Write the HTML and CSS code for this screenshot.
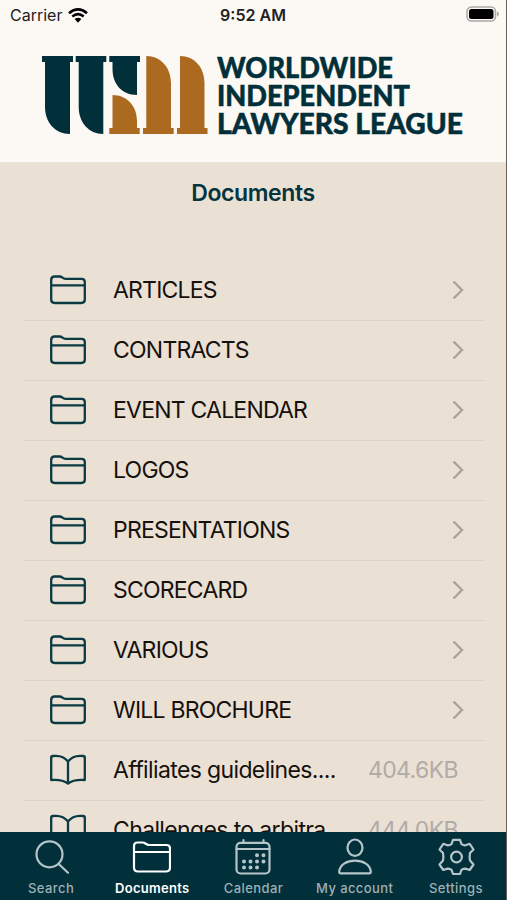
FILE: index.html
```html
<!DOCTYPE html>
<html lang="en">
<head>
    <meta charset="UTF-8">
    <meta name="viewport" content="width=device-width, initial-scale=1.0">
    <title>Documents</title>
    <link rel="stylesheet" href="styles.css">
</head>
<body>
    <!-- shared icons -->
    <svg class="symbols">
        <symbol id="folder" viewBox="0 0 36 30">
            <path d="M1.2 5 Q1.2 1.5 4.7 1.5 H9.5 C12.5 1.5 12.5 3.8 15.5 3.8 H31.5 Q34.8 3.8 34.8 7 V24.5 Q34.8 28 31.3 28 H4.7 Q1.2 28 1.2 24.5 Z M1.2 10.3 H34.8" />
        </symbol>
        <symbol id="book" viewBox="0 0 36 32">
            <path d="M18 7.5 C14.5 3 9 1.2 3 2 Q1.2 2.2 1.2 3.5 V26 C8 25.5 14 26.5 18 29.5 C22 26.5 28 25.5 34.8 26 V3.5 Q34.8 2.2 33 2 C27 1.2 21.5 3 18 7.5 Z V29.5" />
        </symbol>
        <symbol id="chevron" viewBox="0 0 12 20">
            <path d="M1.5 1.5 L10 10 L1.5 18.5" />
        </symbol>
    </svg>

    <div class="app">
        <header>
            <div class="status-bar">
                <div class="carrier">
                    <span>Carrier</span>
                    <svg class="wifi" viewBox="0 0 20 15">
                        <path d="M1 5.2 Q10 -2.5 19 5.2 M4.3 8.6 Q10 3.8 15.7 8.6" />
                        <path class="wifi-dot" d="M6.6 11.1 Q10 8.3 13.4 11.1 L10 14.7 Z" />
                    </svg>
                </div>
                <div class="time">9:52 AM</div>
                <svg class="battery" viewBox="0 0 33 16">
                    <rect class="battery-case" x="1" y="1" width="28.5" height="14" rx="4.5" />
                    <rect x="3" y="3" width="24.5" height="10" rx="2.5" />
                    <path class="battery-tip" d="M31 5.5 Q33 6.2 33 8 Q33 9.8 31 10.5 Z" />
                </svg>
            </div>
            <div class="logo">
                <svg class="logo-mark" viewBox="0 0 166 79">
                    <path class="navy" d="M0 0 H31 V6 H28 V78 C13 78 3 66 3 51 V6 H0 Z" />
                    <path class="navy" d="M33.7 0 H64.3 V6 H61.3 V78 C46.5 78 36.7 66 36.7 51 V6 H33.7 Z" />
                    <path class="navy" d="M67.3 0 H98 V6 H95 V39 C80 39 70.5 28 70.5 13 V6 H67.3 Z" />
                    <path class="gold" d="M70.5 39 C85 39 95 50 95 65 V72 H97.7 V78 H67.3 V72 H70.5 Z" />
                    <path class="gold" d="M104.3 0 C119 0 129 12 129 27 V72 H131.7 V78 H101 V72 H104.3 Z" />
                    <path class="gold" d="M138 0 C153 0 162.5 12 162.5 27 V72 H165.5 V78 H135 V72 H138 Z" />
                </svg>
                <svg class="logo-text" viewBox="0 0 250 84">
                    <text x="0" y="21.5" textLength="176" lengthAdjust="spacingAndGlyphs">WORLDWIDE</text>
                    <text x="0" y="49.8" textLength="193" lengthAdjust="spacingAndGlyphs">INDEPENDENT</text>
                    <text x="0" y="78" textLength="246" lengthAdjust="spacingAndGlyphs">LAWYERS LEAGUE</text>
                </svg>
            </div>
        </header>

        <main>
            <h1>Documents</h1>
            <ul class="list">
                <li><svg class="icon"><use href="#folder" /></svg><span class="name">ARTICLES</span><svg class="chevron"><use href="#chevron" /></svg></li>
                <li><svg class="icon"><use href="#folder" /></svg><span class="name">CONTRACTS</span><svg class="chevron"><use href="#chevron" /></svg></li>
                <li><svg class="icon"><use href="#folder" /></svg><span class="name">EVENT CALENDAR</span><svg class="chevron"><use href="#chevron" /></svg></li>
                <li><svg class="icon"><use href="#folder" /></svg><span class="name">LOGOS</span><svg class="chevron"><use href="#chevron" /></svg></li>
                <li><svg class="icon"><use href="#folder" /></svg><span class="name">PRESENTATIONS</span><svg class="chevron"><use href="#chevron" /></svg></li>
                <li><svg class="icon"><use href="#folder" /></svg><span class="name">SCORECARD</span><svg class="chevron"><use href="#chevron" /></svg></li>
                <li><svg class="icon"><use href="#folder" /></svg><span class="name">VARIOUS</span><svg class="chevron"><use href="#chevron" /></svg></li>
                <li><svg class="icon"><use href="#folder" /></svg><span class="name">WILL BROCHURE</span><svg class="chevron"><use href="#chevron" /></svg></li>
                <li><svg class="icon book"><use href="#book" /></svg><span class="name file">Affiliates guidelines....</span><span class="size">404.6KB</span></li>
                <li><svg class="icon book"><use href="#book" /></svg><span class="name file">Challenges to arbitra...</span><span class="size">444.0KB</span></li>
            </ul>
        </main>

        <nav>
            <a class="tab">
                <svg viewBox="0 0 40 38"><circle cx="19.5" cy="16.3" r="13" /><path d="M28.7 26 L38 34.7" /></svg>
                <span>Search</span>
            </a>
            <a class="tab active">
                <svg viewBox="0 0 40 38"><path d="M3 8 Q3 4.5 6.5 4.5 H11.5 C14.5 4.5 15 7 18 7 H35.5 Q39 7 39 10.5 V29.5 Q39 33.5 35 33.5 H7 Q3 33.5 3 29.5 Z M3 14 H39" /></svg>
                <span>Documents</span>
            </a>
            <a class="tab">
                <svg viewBox="0 0 40 38">
                    <rect x="4.5" y="4.8" width="33" height="30.7" rx="4" />
                    <path d="M4.5 11 H37.5 M11.5 2 V5 M31.5 2 V5" />
                    <path class="dots" d="M25 17.3h.01M31.5 17.3h.01M12 23.5h.01M18.5 23.5h.01M25 23.5h.01M31.5 23.5h.01M12 29.5h.01M18.5 29.5h.01M25 29.5h.01" />
                </svg>
                <span>Calendar</span>
            </a>
            <a class="tab">
                <svg viewBox="0 0 40 38"><ellipse cx="21" cy="9.7" rx="7.5" ry="8.2" /><path d="M5.2 33.5 C6.5 19 35.5 19 36.8 33.5 Q36.8 35.3 35.5 35.3 H6.5 Q5.2 35.3 5.2 33.5 Z" /></svg>
                <span>My account</span>
            </a>
            <a class="tab">
                <svg viewBox="0 0 40 38">
                    <path d="M18 1.8 H25 L26.5 6.2 Q28.5 7.5 30.5 7.3 L34.7 5.8 L38.5 11.5 L35 15 Q34.2 18.8 35 22.5 L38.5 26.5 L34.7 32 L30.5 30.6 Q28.5 30.5 26.5 31.8 L25 36 H18 L16.5 31.8 Q14.5 30.5 12.5 30.6 L8.3 32 L4.5 26.5 L8 22.5 Q8.8 18.8 8 15 L4.5 11.5 L8.3 5.8 L12.5 7.3 Q14.5 7.5 16.5 6.2 Z" />
                    <circle cx="21.5" cy="19" r="5.4" />
                </svg>
                <span>Settings</span>
            </a>
        </nav>
    </div>
</body>
</html>
```
FILE: styles.css
```css
* {
    box-sizing: border-box;
}
body {
    margin: 0;
    font-family: Inter, "Liberation Sans", sans-serif;
    background-color: #eae0d4;
}
svg {
    fill: none;
    stroke-linecap: round;
    stroke-linejoin: round;
    flex-shrink: 0;
}
.symbols {
    display: none;
}
.app {
    display: flex;
    flex-direction: column;
    height: 900px;
    overflow: hidden;
    border-right: 1px solid #68615b;
}
header {
    height: 163px;
    flex-shrink: 0;
    background-color: #fcf9f5;
    border-bottom: 1px solid #eee3d9;
}
.status-bar {
    display: grid;
    grid-template-columns: 1fr auto 1fr;
    align-items: center;
    height: 30px;
    padding: 0 7px 0 10px;
    font-size: 16px;
    color: #222;
}
.carrier {
    display: flex;
    align-items: center;
    gap: 6px;
}
.wifi {
    width: 20px;
    height: 15px;
    stroke: #000;
    stroke-width: 2.6;
    stroke-linecap: butt;
}
.wifi-dot {
    fill: #000;
    stroke: none;
}
.time {
    font-weight: 600;
    margin-right: 3px;
}
.battery {
    width: 33px;
    height: 16px;
    margin-top: -2px;
    justify-self: end;
    fill: #000;
}
.battery-case {
    fill: none;
    stroke: #aaa8a5;
    stroke-width: 1.5;
}
.battery-tip {
    fill: #aaa8a5;
}
.logo {
    display: flex;
    gap: 9px;
    padding: 26px 0 0 42px;
}
.logo-mark {
    width: 166px;
    height: 79px;
}
.navy {
    fill: #012f3a;
}
.gold {
    fill: #ac6a20;
}
.logo-text {
    width: 250px;
    height: 84px;
    overflow: visible;
    fill: #012f3a;
    stroke: #012f3a;
    stroke-width: 0.5;
    font-family: Lato, sans-serif;
    font-size: 29px;
    font-weight: 900;
}
main {
    flex: 1;
    min-height: 0;
    overflow: hidden;
}
h1 {
    margin: 0;
    padding-top: 16px;
    height: 98px;
    font-size: 23px;
    line-height: 28px;
    font-weight: 600;
    letter-spacing: -0.4px;
    text-align: center;
    color: #06343e;
}
.list {
    list-style: none;
    margin: 0 22px 0 24px;
    padding: 0;
}
.list li {
    display: flex;
    align-items: center;
    height: 60px;
    padding: 0 20px 1px 26px;
    border-bottom: 1px solid #d9d3c9;
}
.icon {
    width: 36px;
    height: 30px;
    margin-right: 27px;
    stroke: #0b3a43;
    stroke-width: 2.3;
}
.book {
    height: 32px;
}
.name {
    flex: 1;
    font-size: 23px;
    letter-spacing: -0.78px;
    white-space: nowrap;
    color: #16110d;
}
.file {
    letter-spacing: -0.63px;
}
.chevron {
    width: 12px;
    height: 20px;
    stroke: #aca297;
    stroke-width: 2.4;
    stroke-linecap: butt;
    stroke-linejoin: miter;
}
.size {
    margin-right: 6px;
    font-size: 23px;
    letter-spacing: -0.6px;
    color: #b0aca8;
}
nav {
    display: grid;
    grid-template-columns: repeat(5, 1fr);
    height: 68px;
    flex-shrink: 0;
    background-color: #012f3a;
}
.tab {
    display: flex;
    flex-direction: column;
    align-items: center;
    padding: 6px 0 0 1px;
    font-size: 13px;
    font-weight: 500;
    letter-spacing: 0.4px;
    color: #9eb0b5;
}
.tab svg {
    width: 40px;
    height: 38px;
    margin: 0 2px 4px 0;
    stroke: #b5c5c9;
    stroke-width: 2.2;
}
.tab .dots {
    stroke-width: 4;
}
.tab.active {
    font-weight: 600;
    letter-spacing: 0.3px;
    color: #fff;
}
.tab.active svg {
    stroke: #fff;
}
```
